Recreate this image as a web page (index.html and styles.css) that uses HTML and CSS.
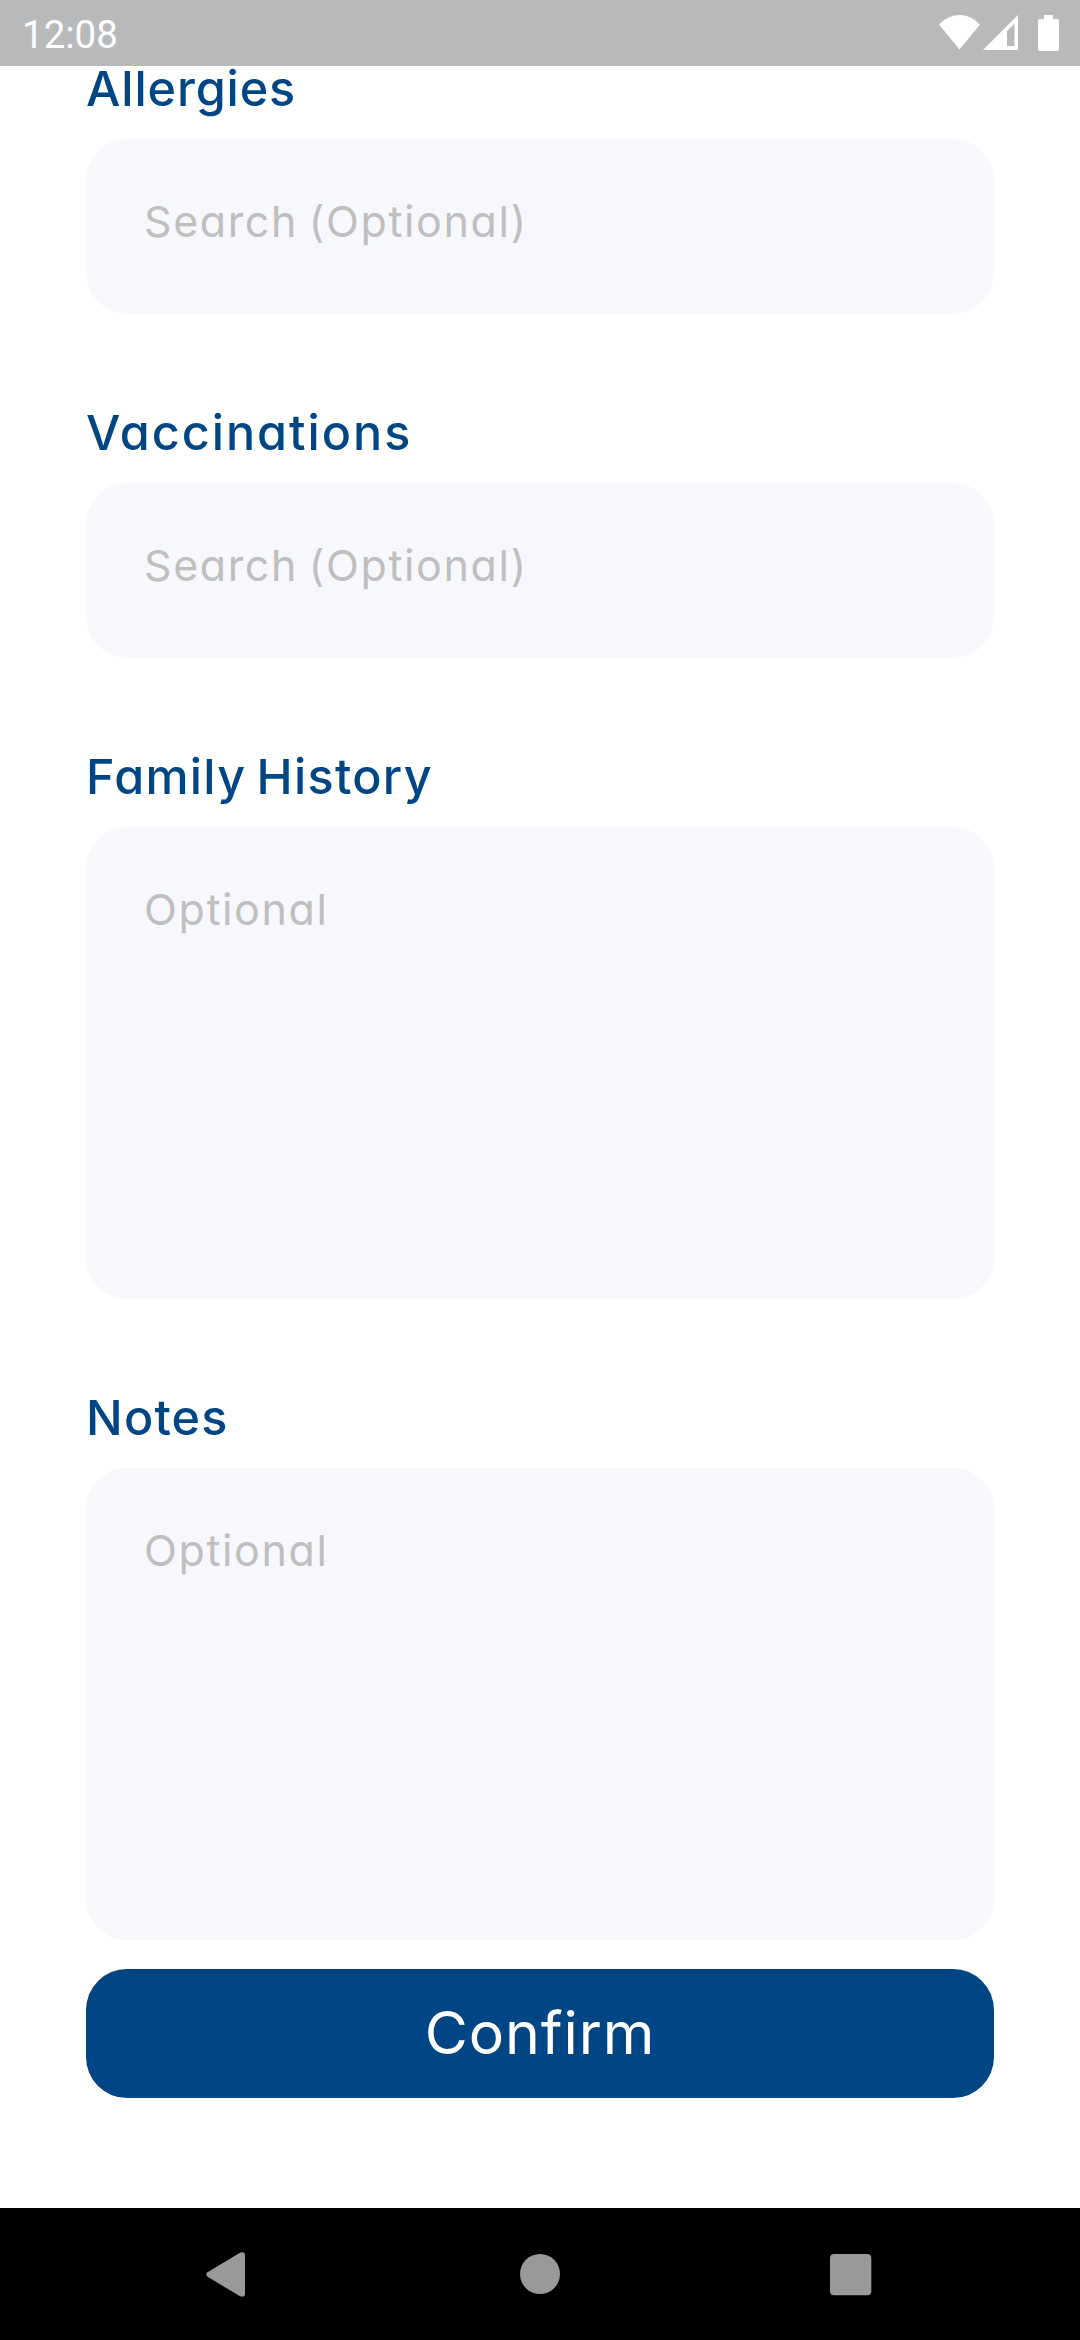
FILE: index.html
```html
<!DOCTYPE html>
<html lang="en">
<head>
<meta charset="utf-8">
<title>Medical details</title>
<link rel="stylesheet" href="styles.css">
</head>
<body>
<div class="screen">
  <header class="status">
    <span class="clock">12:08</span>
    <svg class="status-icons" width="124" height="40" viewBox="936 13 124 40" fill="#fff">
      <path d="M938 24.5Q947 15 958.500 15T979 24.500L958.500 49.500Z"/>
      <path fill-rule="evenodd" d="M982 50L1017 15V50ZM1006 31V46H1013.500V23.500Z"/>
      <path d="M1043 15H1052V19H1056Q1058 19 1058 21V49Q1058 51 1056 51H1039Q1037 51 1037 49V21Q1037 19 1039 19H1043Z"/>
    </svg>
  </header>
  <main class="form">
    <section class="group"><h2 class="label allergies">Allergies</h2><div class="field search">Search (Optional)</div></section>
    <section class="group"><h2 class="label vaccinations">Vaccinations</h2><div class="field search">Search (Optional)</div></section>
    <section class="group"><h2 class="label family">Family History</h2><div class="field tall">Optional</div></section>
    <section class="group"><h2 class="label notes">Notes</h2><div class="field tall">Optional</div></section>
    <button class="confirm" type="button">Confirm</button>
  </main>
  <nav class="nav">
    <svg width="1080" height="132" viewBox="0 2208 1080 132" fill="#999">
      <path d="M207.500 2272.300Q205 2274.500 207.500 2276.700L240 2296.300Q245 2298 245 2293.500V2255.500Q245 2251 240 2252.700Z"/>
      <circle cx="540" cy="2274" r="20"/>
      <rect x="830" y="2254" width="41.300" height="41.300" rx="4"/>
    </svg>
  </nav>
</div>
</body>
</html>
```
FILE: styles.css
```css
* { box-sizing: border-box; }
body { margin: 0; background: #fff; font-family: Inter, sans-serif; font-feature-settings: "cv11" 1; }
.screen { width: 1080px; height: 2340px; display: flex; flex-direction: column; overflow: hidden; }
.status { height: 66px; flex: none; padding: 0 19px 0 22px; background: #b8b9bb; display: flex; justify-content: space-between; align-items: center; }
.clock { font: 38.5px/46px Roboto, sans-serif; color: #fff; padding-top: 4px; }
.status-icons { display: block; }
.form { flex: 1; padding: 0 86px; display: flex; flex-direction: column; }
.group { margin-bottom: 96px; }
.group:last-of-type { margin-bottom: 29px; }
.label { margin: 0 0 27px; font-size: 48.5px; line-height: 46px; font-weight: 500; color: #004684; white-space: nowrap; }
.allergies { letter-spacing: 0.9px; }
.vaccinations { letter-spacing: 2px; }
.family { letter-spacing: 1.3px; word-spacing: -4px; }
.notes { letter-spacing: 1.2px; }
.field { height: 175px; border-radius: 41px; background: #f7f8fc; padding: 52px 57px 0 58px; font-size: 43px; line-height: 60px; letter-spacing: 1.6px; color: #bfbfbf; white-space: nowrap; }
.search { letter-spacing: 1.6px; word-spacing: -3px; }
.tall { height: 472px; }
.confirm { height: 129px; border: 0; border-radius: 41px; background: #004684; color: #fff; font: 400 59px/70px Inter, sans-serif; letter-spacing: 0.9px; padding: 0 0 1px; }
.nav { height: 132px; flex: none; background: #000; }
.nav svg { display: block; }
```
